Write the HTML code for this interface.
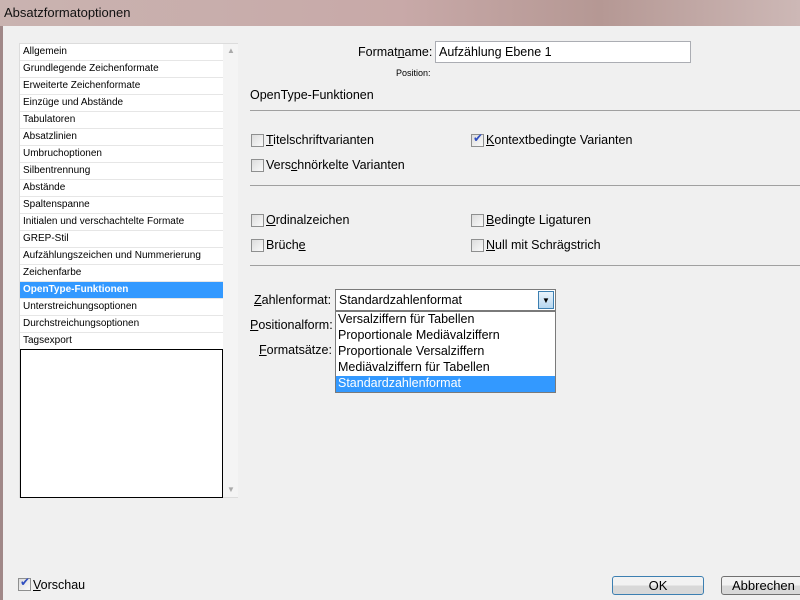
<!DOCTYPE html><html><head><style>
*{margin:0;padding:0;box-sizing:border-box}
body{width:800px;height:600px;overflow:hidden;background:#f0f0f0;font-family:"Liberation Sans","DejaVu Sans",sans-serif;font-size:12px;color:#000;position:relative}
.a{position:absolute;white-space:nowrap}
.title{left:0;top:0;width:800px;height:26px;background:linear-gradient(90deg,#c9b3b0 0%,#c8a9a8 50%,#b59894 75%,#cdb8b6 100%)}
.list{left:19px;top:43px;width:219px;height:455px;background:#fff;border:1px solid #dcdcdc}
.it{position:absolute;left:0;width:203px;height:17px;border-bottom:1px solid #e6e6e6;font-size:10px;padding-left:3px;line-height:16px}
.sel{background:#3399ff;color:#fff;font-weight:bold}
.cb{position:absolute;width:13px;height:13px;border:1px solid #8e8f8f;background:linear-gradient(135deg,#dcdcdc,#fafafa)}
.lbl{font-size:12.5px}
.hr{position:absolute;left:250px;width:550px;height:1px;background:#a0a0a0}
u{text-decoration:underline}
</style></head><body>
<div class="a title"></div>
<div class="a" style="left:4px;top:5px;font-size:13px;color:#111">Absatzformatoptionen</div>
<div class="a" style="left:0;top:26px;width:3px;height:574px;background:#a08888"></div>
<div class="a list">
<div class="it" style="top:0">Allgemein</div>
<div class="it" style="top:17px">Grundlegende Zeichenformate</div>
<div class="it" style="top:34px">Erweiterte Zeichenformate</div>
<div class="it" style="top:51px">Einzüge und Abstände</div>
<div class="it" style="top:68px">Tabulatoren</div>
<div class="it" style="top:85px">Absatzlinien</div>
<div class="it" style="top:102px">Umbruchoptionen</div>
<div class="it" style="top:119px">Silbentrennung</div>
<div class="it" style="top:136px">Abstände</div>
<div class="it" style="top:153px">Spaltenspanne</div>
<div class="it" style="top:170px">Initialen und verschachtelte Formate</div>
<div class="it" style="top:187px">GREP-Stil</div>
<div class="it" style="top:204px">Aufzählungszeichen und Nummerierung</div>
<div class="it" style="top:221px">Zeichenfarbe</div>
<div class="it sel" style="top:238px">OpenType-Funktionen</div>
<div class="it" style="top:255px">Unterstreichungsoptionen</div>
<div class="it" style="top:272px">Durchstreichungsoptionen</div>
<div class="it" style="top:289px">Tagsexport</div>
<div style="position:absolute;left:0;top:305px;width:203px;height:149px;border:1px solid #000"></div>
<div style="position:absolute;left:203px;top:0;width:15px;height:453px;background:#f4f4f4"></div>
<div style="position:absolute;left:207px;top:2px;font-size:8px;color:#aaa">▲</div>
<div style="position:absolute;left:207px;top:441px;font-size:8px;color:#aaa">▼</div>
</div>
<div class="a lbl" style="left:358px;top:45px">Format<u>n</u>ame:</div>
<div class="a" style="left:435px;top:41px;width:256px;height:22px;background:#fff;border:1px solid #abadb3"></div>
<div class="a lbl" style="left:439px;top:45px">Aufzählung Ebene 1</div>
<div class="a" style="left:396px;top:68px;font-size:9px">Position:</div>
<div class="a lbl" style="left:250px;top:88px">OpenType-Funktionen</div>
<div class="hr" style="top:110px"></div>
<div class="cb" style="left:251px;top:134px"></div><div class="a lbl" style="left:266px;top:133px"><u>T</u>itelschriftvarianten</div>
<div class="cb" style="left:471px;top:134px"></div><div class="a" style="left:473px;top:131px;font-size:12px;color:#2f4ec0">✔</div><div class="a lbl" style="left:486px;top:133px"><u>K</u>ontextbedingte Varianten</div>
<div class="cb" style="left:251px;top:159px"></div><div class="a lbl" style="left:266px;top:158px">Vers<u>c</u>hnörkelte Varianten</div>
<div class="hr" style="top:185px"></div>
<div class="cb" style="left:251px;top:214px"></div><div class="a lbl" style="left:266px;top:213px"><u>O</u>rdinalzeichen</div>
<div class="cb" style="left:471px;top:214px"></div><div class="a lbl" style="left:486px;top:213px"><u>B</u>edingte Ligaturen</div>
<div class="cb" style="left:251px;top:239px"></div><div class="a lbl" style="left:266px;top:238px">Brüch<u>e</u></div>
<div class="cb" style="left:471px;top:239px"></div><div class="a lbl" style="left:486px;top:238px"><u>N</u>ull mit Schrägstrich</div>
<div class="hr" style="top:265px"></div>
<div class="a lbl" style="left:254px;top:293px"><u>Z</u>ahlenformat:</div>
<div class="a lbl" style="left:250px;top:318px"><u>P</u>ositionalform:</div>
<div class="a lbl" style="left:259px;top:343px"><u>F</u>ormatsätze:</div>
<div class="a" style="left:335px;top:289px;width:221px;height:22px;background:#fff;border:1px solid #7a7a7a"></div>
<div class="a lbl" style="left:339px;top:293px">Standardzahlenformat</div>
<div class="a" style="left:538px;top:291px;width:16px;height:18px;background:linear-gradient(#eaf4fc,#b7d7f0);border:1px solid #3c7fb1;font-size:8px;text-align:center;line-height:17px">▼</div>
<div class="a" style="left:335px;top:311px;width:221px;height:82px;background:#fff;border:1px solid #7a7a7a"></div>
<div class="a lbl" style="left:338px;top:312px">Versalziffern für Tabellen</div>
<div class="a lbl" style="left:338px;top:328px">Proportionale Mediävalziffern</div>
<div class="a lbl" style="left:338px;top:344px">Proportionale Versalziffern</div>
<div class="a lbl" style="left:338px;top:360px">Mediävalziffern für Tabellen</div>
<div class="a" style="left:336px;top:376px;width:219px;height:16px;background:#3399ff"></div>
<div class="a lbl" style="left:338px;top:376px;color:#fff">Standardzahlenformat</div>
<div class="cb" style="left:18px;top:578px"></div><div class="a" style="left:20px;top:575px;color:#2f4ec0">✔</div>
<div class="a lbl" style="left:33px;top:578px"><u>V</u>orschau</div>
<div class="a" style="left:612px;top:576px;width:92px;height:19px;border:1px solid #3c7fb1;border-radius:3px;background:linear-gradient(#f2f2f2 50%,#d8d8d8 50%);text-align:center;font-size:13px;line-height:17px">OK</div>
<div class="a" style="left:721px;top:576px;width:82px;height:19px;border:1px solid #707070;border-radius:3px;background:linear-gradient(#f2f2f2 50%,#d8d8d8 50%);padding-left:10px;font-size:13px;line-height:17px">Abbrechen</div>
</body></html>
